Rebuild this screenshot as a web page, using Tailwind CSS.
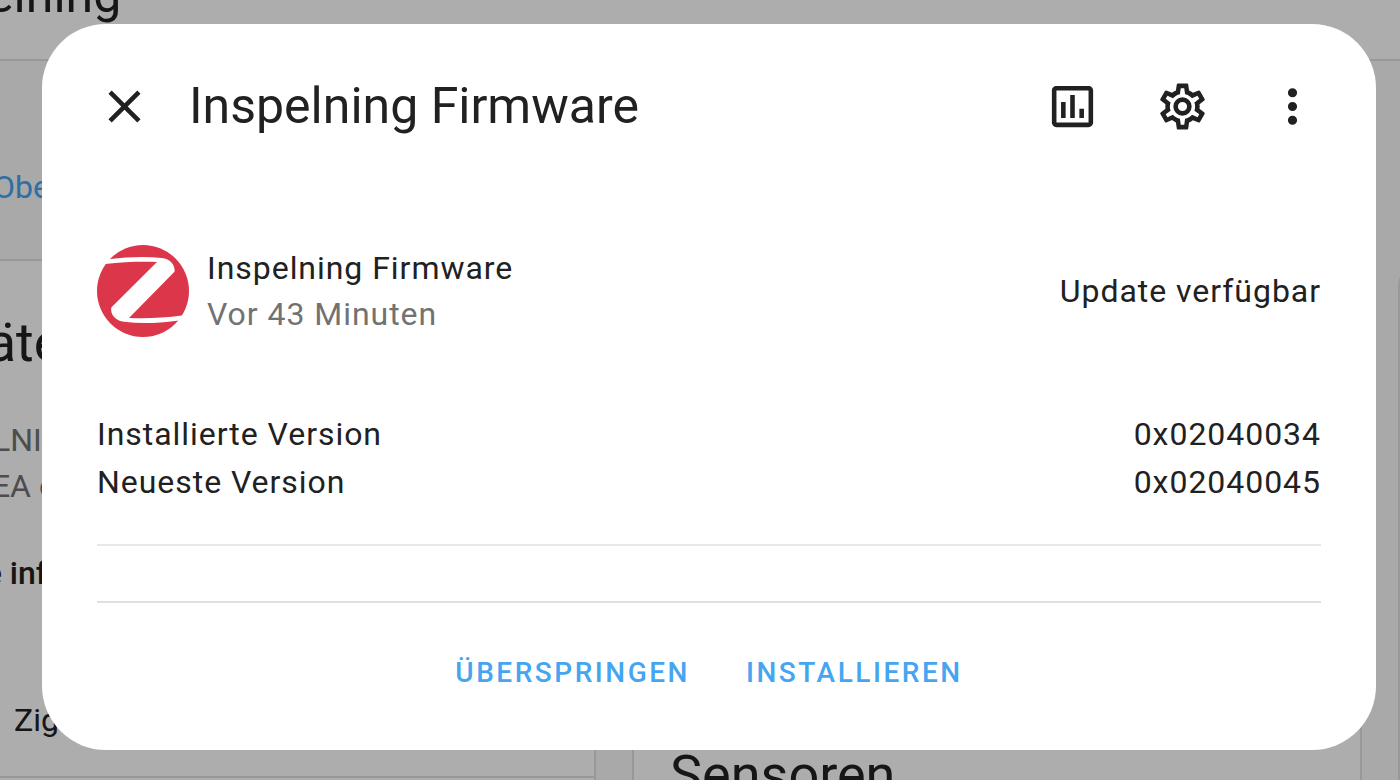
<!DOCTYPE html>
<html lang="de">

<head>
    <meta charset="UTF-8" />
    <meta name="viewport" content="width=device-width, initial-scale=1.0" />
    <title>Inspelning Firmware</title>
    <script src="https://cdn.jsdelivr.net/npm/@tailwindcss/browser@4"></script>
</head>

<body class="h-screen overflow-hidden bg-[#fafafa] font-['Roboto',sans-serif] text-[#212121]">

    <!-- Device page, scrolled a little, behind the dialog -->
    <div class="absolute inset-0 overflow-hidden" aria-hidden="true">
        <div class="-ml-[134px] -mt-[68px]">
            <header class="flex h-[129px] items-center border-b-2 border-[#e0e0e0] bg-white pl-[26px] text-[50px]">
                <h2>Inspelning</h2>
            </header>
            <nav class="flex h-[198px] items-center pl-[127px] pt-[54px] text-[32px]">
                <a href="#" class="text-[#45a5f0]">Obergeschoss</a>
            </nav>

            <div class="grid auto-cols-[730px] grid-flow-col gap-9">
                <section class="flex h-[600px] flex-col rounded-[28px] border-2 border-[#e0e0e0] bg-white">
                    <div class="flex flex-col px-9 pt-12 text-[32px]">
                        <h2 class="text-[54px] leading-[68px]">Geräteinformationen</h2>
                        <p class="mt-10 leading-[46px] text-[#727272]">INSPELNING Smart plug</p>
                        <p class="leading-[46px] text-[#727272]">von IKEA of Sweden</p>
                        <h3 class="mt-10 font-medium leading-[48px]">Zigbee info</h3>
                        <p class="mt-[99px] pl-[110px] leading-[48px]">Zigbee</p>
                    </div>
                    <div class="mt-8 border-t-2 border-[#e0e0e0]"></div>
                </section>
                <div class="flex flex-col gap-9">
                    <section class="h-[400px] rounded-[28px] border-2 border-[#e0e0e0] bg-white"></section>
                    <section class="h-[400px] rounded-[28px] border-2 border-[#e0e0e0] bg-white px-9 pt-11">
                        <h2 class="text-[54px] leading-[68px]">Sensoren</h2>
                    </section>
                </div>
                <section class="rounded-[28px] border-2 border-[#e0e0e0] bg-white"></section>
            </div>
        </div>
    </div>

    <!-- Scrim and dialog -->
    <div class="absolute inset-0 bg-black/32 pl-[42px] pr-6 pt-6">
        <div role="dialog" aria-labelledby="dialogTitle" class="rounded-[64px] bg-white pb-9">
            <header class="flex items-center pl-[27px] pr-[29px] pt-[27px]">
                <button aria-label="Schließen" class="grid size-[110px] place-items-center">
                    <svg class="size-[55px]" viewBox="0 0 24 24" fill="currentColor">
                        <path
                            d="M19 6.41L17.59 5L12 10.59L6.41 5L5 6.41L10.59 12L5 17.59L6.41 19L12 13.41L17.59 19L19 17.59L13.41 12L19 6.41Z" />
                    </svg>
                </button>
                <h1 id="dialogTitle" class="flex-1 pl-2.5 text-[50px]">Inspelning Firmware</h1>
                <button aria-label="Verlauf" class="grid size-[110px] place-items-center">
                    <svg class="size-[55px]" viewBox="0 0 24 24" fill="currentColor">
                        <path
                            d="M9 17H7V10H9V17M13 17H11V7H13V17M17 17H15V13H17V17M19 19H5V5H19V19.1M19 3H5C3.9 3 3 3.9 3 5V19C3 20.1 3.9 21 5 21H19C20.1 21 21 20.1 21 19V5C21 3.9 20.1 3 19 3Z" />
                    </svg>
                </button>
                <button aria-label="Einstellungen" class="grid size-[110px] place-items-center">
                    <svg class="size-[55px]" viewBox="0 0 24 24" fill="currentColor">
                        <path
                            d="M12 8A4 4 0 0 1 16 12A4 4 0 0 1 12 16A4 4 0 0 1 8 12A4 4 0 0 1 12 8M12 10A2 2 0 0 0 10 12A2 2 0 0 0 12 14A2 2 0 0 0 14 12A2 2 0 0 0 12 10M10 22C9.75 22 9.54 21.82 9.5 21.58L9.13 18.93C8.5 18.68 7.96 18.34 7.44 17.94L4.95 18.95C4.73 19.03 4.46 18.95 4.34 18.73L2.34 15.27C2.21 15.05 2.27 14.78 2.46 14.63L4.57 12.97L4.5 12L4.57 11L2.46 9.37C2.27 9.22 2.21 8.95 2.34 8.73L4.34 5.27C4.46 5.05 4.73 4.96 4.95 5.05L7.44 6.05C7.96 5.66 8.5 5.32 9.13 5.07L9.5 2.42C9.54 2.18 9.75 2 10 2H14C14.25 2 14.46 2.18 14.5 2.42L14.87 5.07C15.5 5.32 16.04 5.66 16.56 6.05L19.05 5.05C19.27 4.96 19.54 5.05 19.66 5.27L21.66 8.73C21.79 8.95 21.73 9.22 21.54 9.37L19.43 11L19.5 12L19.43 13L21.54 14.63C21.73 14.78 21.79 15.05 21.66 15.27L19.66 18.73C19.54 18.95 19.27 19.04 19.05 18.95L16.56 17.95C16.04 18.34 15.5 18.68 14.87 18.93L14.5 21.58C14.46 21.82 14.25 22 14 22H10M11.25 4L10.88 6.61C9.68 6.86 8.62 7.5 7.85 8.39L5.44 7.35L4.69 8.65L6.8 10.2C6.4 11.37 6.4 12.64 6.8 13.8L4.68 15.36L5.43 16.66L7.86 15.62C8.63 16.5 9.68 17.14 10.87 17.38L11.24 20H12.76L13.13 17.39C14.32 17.14 15.37 16.5 16.14 15.62L18.57 16.66L19.32 15.36L17.2 13.81C17.6 12.64 17.6 11.37 17.2 10.2L19.31 8.65L18.56 7.35L16.15 8.39C15.38 7.5 14.32 6.86 13.12 6.62L12.75 4H11.25Z" />
                    </svg>
                </button>
                <button aria-label="Menü" class="grid size-[110px] place-items-center">
                    <svg class="size-[55px]" viewBox="0 0 24 24" fill="currentColor">
                        <path
                            d="M12 16A2 2 0 0 1 14 18A2 2 0 0 1 12 20A2 2 0 0 1 10 18A2 2 0 0 1 12 16M12 10A2 2 0 0 1 14 12A2 2 0 0 1 12 14A2 2 0 0 1 10 12A2 2 0 0 1 12 10M12 4A2 2 0 0 1 14 6A2 2 0 0 1 12 8A2 2 0 0 1 10 6A2 2 0 0 1 12 4Z" />
                    </svg>
                </button>
            </header>

            <div class="px-[55px] pt-[84px] text-[32px] tracking-[0.03em]">
                <!-- Entity state -->
                <div class="flex items-center leading-[46px]">
                    <svg class="size-[92px]" viewBox="0 0 92 92">
                        <circle cx="46" cy="46" r="46" fill="#db364a" />
                        <path fill="#fff"
                            d="M0 19.5L8.3 19C26 17 42 16.6 60 17L14.3 62.5C13 70 19 75.8 27 76.8C45 79 62 78 80 75.7L92 74.5V69.8L85 70.6C67 73 50 73.5 32 73L77.7 26.6C78 19 73 14.2 65 13C48 11.2 30 12 13.3 14L0 15.8Z" />
                    </svg>
                    <div class="flex-1 pl-[18px]">
                        <div>Inspelning Firmware</div>
                        <div class="text-[#727272]">Vor 43 Minuten</div>
                    </div>
                    <div>Update verfügbar</div>
                </div>

                <dl class="mt-[73px] leading-[48px]">
                    <div class="flex justify-between">
                        <dt>Installierte Version</dt>
                        <dd>0x02040034</dd>
                    </div>
                    <div class="flex justify-between">
                        <dt>Neueste Version</dt>
                        <dd>0x02040045</dd>
                    </div>
                </dl>

                <hr class="mt-[38px] border-t-2 border-[#e8e8e8]" />
                <hr class="mt-[55px] border-t-2 border-[#e0e0e0]" />
            </div>

            <div class="flex justify-center gap-[18px] pt-[29px] text-[28px] font-medium tracking-[0.09em] text-[#45a5f0]">
                <button class="h-[82px] px-[19px]">ÜBERSPRINGEN</button>
                <button class="h-[82px] px-[19px]">INSTALLIEREN</button>
            </div>
        </div>
    </div>

</body>

</html>
